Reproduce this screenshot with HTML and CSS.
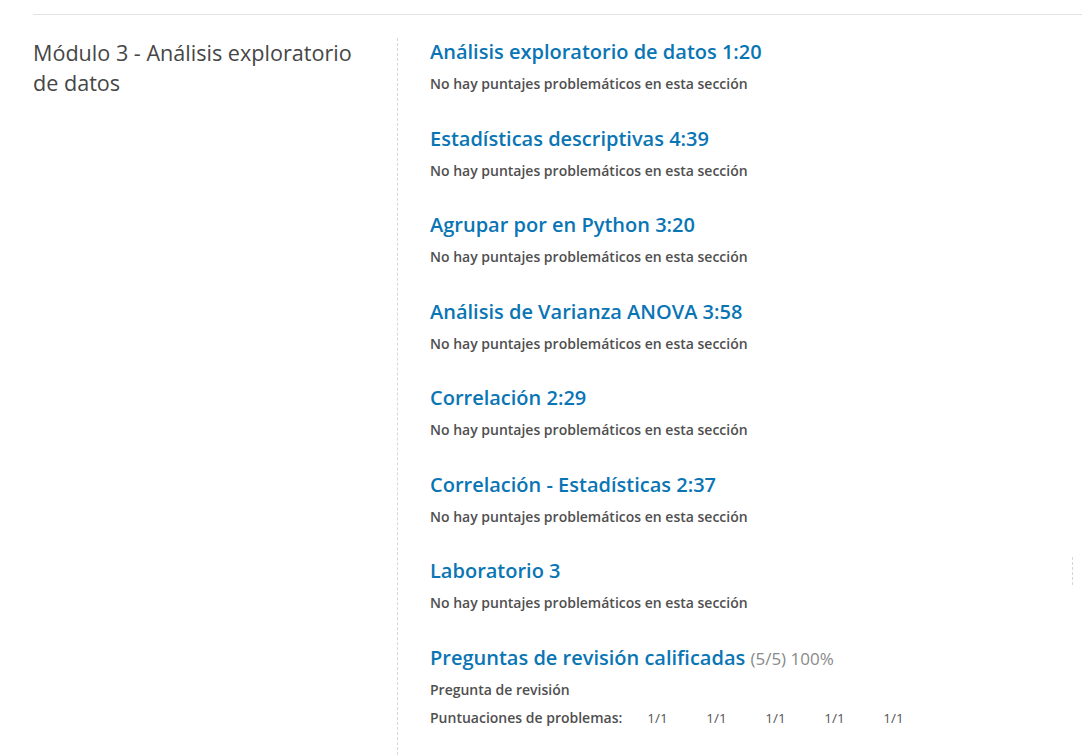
FILE: index.html
```html
<!DOCTYPE html>
<html lang="es">
<head>
<meta charset="utf-8">
<title>Progreso</title>
<link rel="stylesheet" href="styles.css">
</head>
<body>
<section class="chapter">
  <div class="chapter-title">
    <h2>Módulo 3 - Análisis exploratorio de datos</h2>
  </div>
  <div class="sections">
    <div class="sec">
      <h3 class="sec-title">Análisis exploratorio de datos 1:20</h3>
      <p class="sec-note">No hay puntajes problemáticos en esta sección</p>
    </div>
    <div class="sec">
      <h3 class="sec-title">Estadísticas descriptivas 4:39</h3>
      <p class="sec-note">No hay puntajes problemáticos en esta sección</p>
    </div>
    <div class="sec">
      <h3 class="sec-title">Agrupar por en Python 3:20</h3>
      <p class="sec-note">No hay puntajes problemáticos en esta sección</p>
    </div>
    <div class="sec">
      <h3 class="sec-title">Análisis de Varianza ANOVA 3:58</h3>
      <p class="sec-note">No hay puntajes problemáticos en esta sección</p>
    </div>
    <div class="sec">
      <h3 class="sec-title">Correlación 2:29</h3>
      <p class="sec-note">No hay puntajes problemáticos en esta sección</p>
    </div>
    <div class="sec">
      <h3 class="sec-title">Correlación - Estadísticas 2:37</h3>
      <p class="sec-note">No hay puntajes problemáticos en esta sección</p>
    </div>
    <div class="sec">
      <div class="sec-head">
        <h3 class="sec-title">Laboratorio 3</h3>
        <span class="side-rule"></span>
      </div>
      <p class="sec-note">No hay puntajes problemáticos en esta sección</p>
    </div>
    <div class="sec">
      <h3 class="sec-title">Preguntas de revisión calificadas <span class="score">(5/5) 100%</span></h3>
      <p class="sec-note sec-note-tight">Pregunta de revisión</p>
      <div class="scores">
        <span class="scores-label">Puntuaciones de problemas:</span>
        <ol class="score-list">
          <li>1/1</li>
          <li>1/1</li>
          <li>1/1</li>
          <li>1/1</li>
          <li>1/1</li>
        </ol>
      </div>
    </div>
  </div>
</section>
</body>
</html>
```
FILE: styles.css
```css
html, body {
  margin: 0;
  padding: 0;
  background: #ffffff;
  font-family: "Open Sans", "Noto Sans", sans-serif;
  overflow: hidden;
}

.chapter {
  margin: 14px 0 0 33px;
  border-top: 1px solid #e3e3e3;
  display: flex;
  align-items: stretch;
  min-height: 760px;
}

.chapter-title {
  width: 364px;
  flex: none;
  padding-top: 23px;
}

.chapter-title h2 {
  margin: 0;
  font-size: 21.6px;
  font-weight: 400;
  line-height: 30px;
  color: #464646;
  padding-right: 20px;
}

.sections {
  flex: 1;
  margin-top: 23px;
  border-left: 1px dashed #d7d7d7;
  padding-left: 32px;
}

.sec {
  padding-bottom: 30.5px;
}

.sec-head {
  display: flex;
  align-items: center;
  justify-content: space-between;
  height: 27px;
}

.side-rule {
  width: 0;
  height: 28px;
  border-left: 1px dashed #d7d7d7;
  margin: -1px 9px -1px 0;
}

.sec-title {
  margin: 0;
  font-size: 20px;
  font-weight: 600;
  line-height: 27px;
  color: #0a75b4;
}

.score {
  font-size: 17px;
  font-weight: 400;
  color: #8a8a8a;
}

.sec-note {
  margin: 9px 0 0;
  font-size: 14px;
  font-weight: 600;
  line-height: 20px;
  color: #4f4f4f;
}

.sec-note-tight {
  margin-top: 8px;
}

.scores {
  display: flex;
  align-items: center;
  margin-top: 8px;
  line-height: 20px;
}

.scores-label {
  font-size: 14px;
  font-weight: 600;
  color: #4f4f4f;
}

.score-list {
  display: flex;
  list-style: none;
  margin: 0 0 0 25px;
  padding: 0;
}

.score-list li {
  width: 59px;
  font-size: 13.5px;
  color: #555555;
}
```
